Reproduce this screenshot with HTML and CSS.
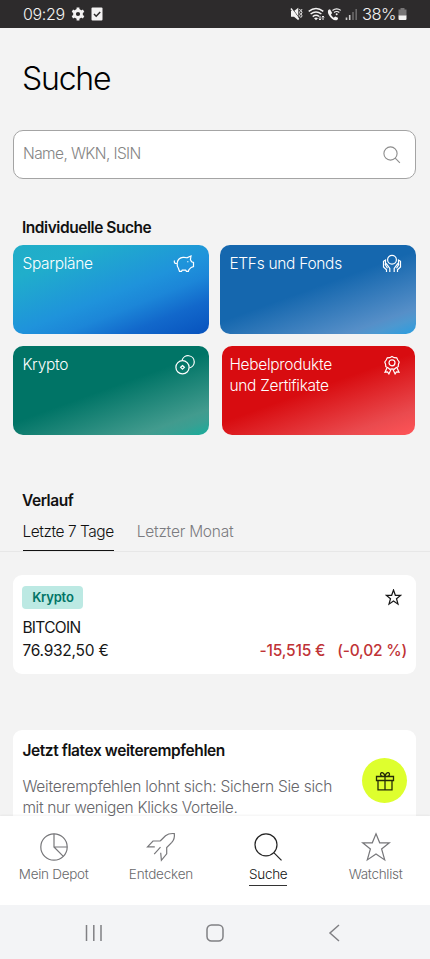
FILE: index.html
```html
<!DOCTYPE html>
<html lang="de">
<head>
<meta charset="utf-8">
<meta name="viewport" content="width=device-width, initial-scale=1">
<title>Suche</title>
<link rel="stylesheet" href="styles.css">
</head>
<body>
<div class="app">
  <header class="status">
    <span class="time">09:29</span>
    <svg class="gear" width="14" height="14" viewBox="0 0 14 14"><circle cx="7" cy="7" r="3.5" fill="none" stroke="#f3f2f2" stroke-width="2.8"/><path d="M7 .5v3M7 10.500v3M1.370 3.750l2.600 1.500M10.030 8.750l2.600 1.500M1.370 10.250l2.600-1.500M10.030 5.250l2.600-1.500" stroke="#f3f2f2" stroke-width="2.800" fill="none"/></svg>
    <svg class="check" width="12" height="14" viewBox="0 0 12 14"><rect x=".5" y=".5" width="11" height="13" rx="1" fill="#f3f2f2"/><path d="M3 7l2.200 2.200L9.200 5" stroke="#2d2b2c" stroke-width="1.500" fill="none"/></svg>
    <svg class="signals" width="68" height="16" viewBox="0 0 68 16">
      <path d="M1 5h3L8.300 1.800v12.400L4 10.800H1z" fill="#f3f2f2"/>
      <path d="M2 2.200l7.300 10" stroke="#2d2b2c" stroke-width=".8"/><path d="M1 2.500l7.800 10.800" stroke="#f3f2f2" stroke-width="1.400"/>
      <path d="M9.500 3l1 1.700-1 1.700 1 1.700-1 1.700 1 1.700M12 3l-.8 1.700.8 1.700-.8 1.700.8 1.700-.8 1.700" stroke="#f3f2f2" fill="none" stroke-width=".9"/>
      <g stroke="#f3f2f2" fill="none" stroke-width="1.500"><path d="M18.700 5.300q7.300-5.600 14.600 0M20.600 8q5.400-4.200 10.800 0M22.700 10.600q3.300-2.400 6.300-.2"/></g>
      <path d="M24 12.200q2-1.500 4 0L26 14.300z" fill="#f3f2f2"/>
      <path d="M30 10v4M28.800 12.700L30 14l1.200-1.300M33 14v-4M31.800 11.300L33 10l1.200 1.300" stroke="#f3f2f2" stroke-width="1" fill="none"/>
      <path d="M40 3.300c-2.200.2-2.700 2.700-1.200 5.400 1.800 3.600 5 6 7.500 5.600 1.400-.3 1.900-1.400 1.700-2.500l-2.800-1.400-1.500 1.300c-1.200-.7-2.200-1.900-2.700-3.200l1.200-1.400z" fill="#f3f2f2"/>
      <path d="M42.500 4.400q4.200-3.200 8.300 0M44 6.500q2.700-2 5.300 0" stroke="#f3f2f2" fill="none" stroke-width="1.200"/><circle cx="46.700" cy="8.300" r="1" fill="#f3f2f2"/>
      <path d="M56.500 11.500V14M59.700 9v5" stroke="#c9c8c8" stroke-width="1.600"/><path d="M63 6v8M66.200 3v11" stroke="#6b696a" stroke-width="1.600"/>
    </svg>
    <span class="percent">38%</span>
    <svg class="battery" width="9" height="13" viewBox="0 0 9 13"><path d="M2.500 0h4v1.500H8.500V8H.5V1.500h2z" fill="#777576"/><path d="M.5 7.500h8V11q0 1-1 1h-6q-1 0-1-1z" fill="#f3f2f2"/></svg>
  </header>

  <main class="content">
    <h1 class="title">Suche</h1>
    <div class="search">
      <span class="placeholder">Name, WKN, ISIN</span>
      <svg width="18" height="18" viewBox="0 0 18 18" fill="none" stroke="#8d8d8d" stroke-width="1.100"><circle cx="7.500" cy="7.500" r="6.600"/><path d="M12.200 12.200l4.700 4.600"/></svg>
    </div>

    <h2 class="heading individual">Individuelle Suche</h2>
    <div class="tiles">
      <div class="tile savings"><span>Sparpläne</span>
        <svg width="22" height="20" viewBox="0 0 22 20"><path d="M4.200 9C4.700 5.700 7 3.600 10 3.400c1.500-.1 2.700 0 3.900.4L18 2l-.6 3.600 1.200 2.200 1.900.7v4l-2.300.9-2.200 2.200-.6 1.700h-2l-.7-1.100H9.200l-.7 1.100h-2l-1-2.800C4.300 12.700 3.900 11 4.200 9zM4.100 9.300C2.200 10 .7 8.700 1.500 6.500M14.800 7.200v1"/></svg>
      </div>
      <div class="tile funds"><span>ETFs und Fonds</span>
        <svg width="20" height="20" viewBox="0 0 20 20"><circle cx="10" cy="5.800" r="4.400"/><path d="M7.800 18v-3.500L4.500 9.800 3.300 10.700l2.200 3.600M3.500 11.200V6L1.500 7.300V13l3 2.800V18M12.200 18v-3.500l3.300-4.700 1.200.9-2.200 3.600M16.500 11.200V6l2 1.300V13l-3 2.800V18"/></svg>
      </div>
      <div class="tile crypto"><span>Krypto</span>
        <svg width="20" height="20" viewBox="0 0 20 20"><circle cx="7.500" cy="12.300" r="6.600"/><path d="M7.100 5.200A6.200 6.200 0 1 1 14.300 13M7.500 10.500l1.900 1.800-1.900 1.900-1.900-1.900z"/></svg>
      </div>
      <div class="tile leverage"><span>Hebelprodukte<br>und Zertifikate</span>
        <svg width="20" height="20" viewBox="0 0 20 20"><path d="M10 1.500l2.200 1.200 2.500.1 1.100 2.200 1.400 2-.8 2.300-.2 2.400-2.200 1-1.800 1.600-2.200-.5-2.200.5L6 12.700l-2.200-1-.2-2.400L2.800 7l1.400-2 1.100-2.200 2.500-.1z"/><circle cx="10" cy="7.800" r="3"/><path d="M5 12.700L3 17.200l2.500-.3 1.400 2L9 14.400M15 12.700l2 4.500-2.500-.3-1.400 2-2.100-4.500"/></svg>
      </div>
    </div>

    <h2 class="heading history">Verlauf</h2>
    <nav class="tabs"><span class="tab active">Letzte 7 Tage</span><span class="tab month">Letzter Monat</span></nav>

    <article class="card quote">
      <div class="row top"><span class="badge">Krypto</span>
        <svg width="17" height="17" viewBox="0 0 17 17" fill="none" stroke="#161616" stroke-width="1.200"><path d="M8.500 1l1.850 5.300h5.450l-4.300 3.400 1.500 5.500-4.500-3.100-4.500 3.100 1.500-5.500L1.200 6.300h5.450z"/></svg>
      </div>
      <div class="name">BITCOIN</div>
      <div class="row values"><span class="price">76.932,50 €</span><span class="change"><span>-15,515 €</span><span>(-0,02 %)</span></span></div>
    </article>

    <article class="card promo">
      <div>
        <h2 class="promo-title">Jetzt flatex weiterempfehlen</h2>
        <p class="promo-text"><span class="p1">Weiterempfehlen lohnt sich: Sichern Sie sich</span><br><span class="p2">mit nur wenigen Klicks Vorteile.</span></p>
      </div>
      <div class="gift"><svg width="20" height="20" viewBox="0 0 20 20" fill="none" stroke="#252b08" stroke-width="1.300"><path d="M1.500 5.500h17v4h-17zM3 9.500v9.300h14V9.500M10 5.500v13.300M10 5.500C6.500 5.500 5 4.300 5.600 2.600 6.500.8 9.300 1.500 10 5.500zM10 5.500c3.500 0 5-1.200 4.400-2.900C13.500.8 10.700 1.500 10 5.500z"/></svg></div>
    </article>
  </main>

  <nav class="bottom">
    <div class="item"><svg width="30" height="30" viewBox="0 0 30 30"><circle cx="15" cy="15" r="13.200"/><path d="M15 1.800V15h13.200M15 15l9.300 9.300"/></svg><span class="n1">Mein Depot</span></div>
    <div class="item"><svg width="30" height="30" viewBox="0 0 30 30"><path d="M14.200 9L19.500 3.800C22 1.800 25 1.300 28.300 1.600c.5 3.500-.3 6.300-2.500 8.700L20.700 15.500v6.300l-5.300 6.500-.7-7.600M14.200 9H7l-5.500 5.800 7.300.1M14.500 15.200l-6.300 7"/></svg><span class="n2">Entdecken</span></div>
    <div class="item selected"><svg width="30" height="30" viewBox="0 0 30 30"><circle cx="13" cy="12.800" r="11"/><path d="M20.800 20.600l7.700 7.700"/></svg><span class="n3">Suche</span></div>
    <div class="item"><svg width="30" height="30" viewBox="0 0 30 30"><path d="M15 1.800l3.700 9h9.700l-7.800 6.200 3.100 10.900L15 22l-8.700 5.900L9.400 17 1.600 10.800h9.700z"/></svg><span class="n4">Watchlist</span></div>
  </nav>
  <footer class="system">
    <svg width="18" height="18" viewBox="0 0 18 18"><path d="M1.500 1v16M8.800 1v16M16 1v16"/></svg>
    <svg width="18" height="18" viewBox="0 0 18 18"><rect x="1" y="1" width="16" height="16" rx="4.500"/></svg>
    <svg width="18" height="18" viewBox="0 0 18 18"><path d="M13 1L4 9l9 8"/></svg>
  </footer>
</div>
</body>
</html>
```

FILE: styles.css
```css
* { box-sizing: border-box; }
body { margin: 0; background: #f3f3f3; font-family: Inter, Roboto, sans-serif; color: #161616; font-size: 15.5px; font-weight: 300; }
h1, h2, p { margin: 0; }
svg { display: block; flex: none; }
.app { width: 430px; height: 959px; display: flex; flex-direction: column; overflow: hidden; }

.status { height: 28px; flex: none; background: #2d2b2c; color: #f3f2f2; display: flex; align-items: center; padding: 0 23px; }
.time { font-size: 16px; width: 48px; font-weight: 300; letter-spacing: -.35px; }
.check { margin-left: 6px; }
.signals { margin-left: auto; }
.percent { font-size: 16.5px; font-weight: 300; letter-spacing: -.5px; margin-left: 4px; width: 36px; white-space: nowrap; }

.content { flex: 1; min-height: 0; overflow: hidden; }
.title { font-size: 32px; font-weight: 300; letter-spacing: -1.2px; line-height: 40px; color: #000; padding: 31px 22px 0; }
.search { margin: 31px 14px 0 13px; height: 49px; border: 1px solid #a4a4a4; border-radius: 10px; background: #fff; display: flex; align-items: center; justify-content: space-between; padding: 0 14.5px 0 9px; }
.placeholder { color: #858585; padding-bottom: 3px; letter-spacing: -.6px; }
.heading { font-size: 15.5px; font-weight: 600; letter-spacing: -.45px; line-height: 20px; color: #111; padding: 0 22px; }
.individual { margin-top: 39px; }

.tiles { display: grid; grid-template-columns: 196px 196px; column-gap: 11px; row-gap: 12px; margin: 7px 14px 0 13.4px; }
.tile { height: 89px; border-radius: 10px; color: #fff; display: flex; justify-content: space-between; align-items: flex-start; padding: 8px 14.500px 0 9px; line-height: 21px; letter-spacing: -.3px; white-space: nowrap; }
.tile svg { fill: none; stroke: #fff; stroke-width: 1.200; margin-top: 1px; }
.savings { background: linear-gradient(158deg, #21adc8 0%, #20aecb 20%, #1f93db 53%, #1c86d8 65%, #1268cb 80%, #0752bd 100%); }
.funds { background: linear-gradient(160deg, #1567ae 0%, #1567ae 48%, #568fc8 84%, #4d98d0 90%, #2a9ee0 100%); }
.crypto { background: linear-gradient(160deg, #007466 0%, #007466 48%, #429b8e 84%, #3a9f92 90%, #17ad9c 100%); }
.leverage { background: linear-gradient(160deg, #d80c10 0%, #d80c10 48%, #ea4a4e 84%, #ff5558 100%); margin: 0 1px 0 2px; padding: 8px 13.500px 0 7px; }

.history { margin-top: 56px; }
.tabs { display: flex; gap: 23px; height: 41px; padding: 0 22.5px; border-bottom: 1px solid #e7e7e7; line-height: 22px; white-space: nowrap; }
.tab { padding-top: 10px; color: #7b7b80; letter-spacing: -.22px; }
.tab.active { color: #111; border-bottom: 1.500px solid #111; letter-spacing: -.46px; }

.card { background: #fff; border-radius: 9px; margin: 0 14px 0 13.4px; }
.quote { margin-top: 23px; height: 99px; padding: 11px 9px 0; }
.row { display: flex; justify-content: space-between; align-items: center; white-space: nowrap; }
.top { height: 23px; padding-right: 5px; }
.badge { width: 61px; height: 23px; border-radius: 4px; background: #bce9e3; color: #007466; font-size: 13px; font-weight: 600; letter-spacing: -.2px; line-height: 22px; text-align: center; }
.name { margin-top: 8px; line-height: 22px; font-weight: 400; letter-spacing: -.7px; }
.values { line-height: 24px; }
.price { font-weight: 400; letter-spacing: -.24px; }
.change { color: #bf3336; font-weight: 500; display: flex; gap: 12px; letter-spacing: -.2px; }
.promo { margin-top: 56px; height: 110px; padding: 11px 9px 0; display: flex; justify-content: space-between; white-space: nowrap; }
.promo-title { font-size: 15.5px; letter-spacing: -.4px; line-height: 20px; font-weight: 600; color: #111; }
.promo-text { color: #66666a; line-height: 21px; margin-top: 15px; }
.p1 { letter-spacing: -.24px; }
.p2 { letter-spacing: -.32px; }
.gift { width: 45px; height: 45px; border-radius: 50%; background: #deff2e; display: flex; align-items: center; justify-content: center; margin-top: 17px; flex: none; }

.bottom { height: 89px; flex: none; background: #fff; display: grid; grid-template-columns: repeat(4, 107.300px); box-shadow: 0 -1px 2px rgba(0,0,0,.05); position: relative; color: #68686b; }
.item { display: flex; flex-direction: column; align-items: center; padding-top: 16px; font-size: 13.5px; line-height: 20px; }
.item svg { fill: none; stroke: #77777a; stroke-width: 1.200; }
.item > span { margin-top: 2px; height: 21px; white-space: nowrap; letter-spacing: -.3px; }
.item > .n2 { letter-spacing: -.2px; }
.item.selected { color: #111; }
.selected svg { stroke: #222; }
.item.selected > span { border-bottom: 1.500px solid #333; height: 22px; }
.system { height: 54px; flex: none; background: #f3f4f6; display: flex; justify-content: space-between; align-items: center; padding: 2px 86px 0 85px; }
.system svg { fill: none; stroke: #808084; stroke-width: 1.500; }
```
